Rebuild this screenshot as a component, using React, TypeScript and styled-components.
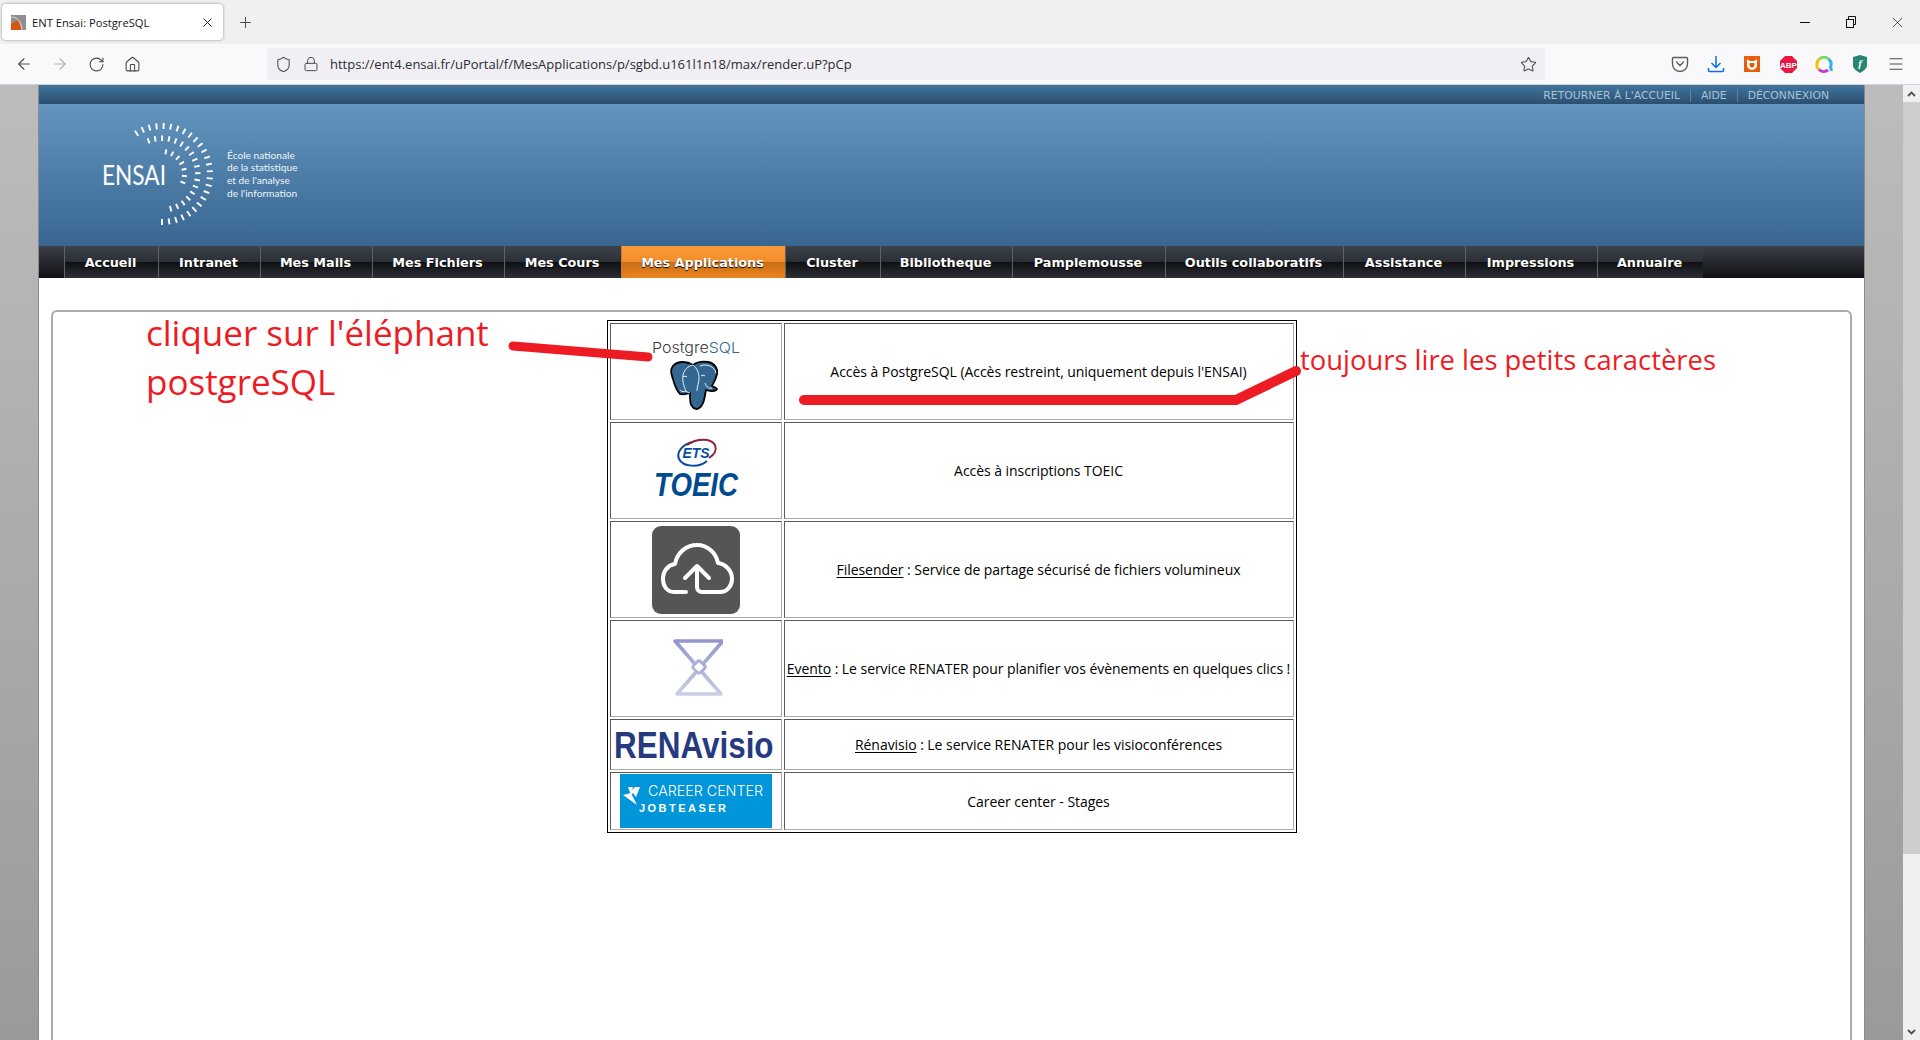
import React from 'react';
import styled, { createGlobalStyle } from 'styled-components';
import {
  ArrowLeft,
  ArrowRight,
  House,
  Lock,
  Menu,
  Plus,
  RotateCw,
  Shield,
  Star,
  X,
} from 'lucide-react';

const GlobalStyle = createGlobalStyle`
  html, body {
    margin: 0;
    padding: 0;
    height: 100%;
    overflow: hidden;
    background: #fff;
  }
  * {
    box-sizing: border-box;
  }
`;

const Root = styled.div`
  position: relative;
  width: 1920px;
  height: 1040px;
  overflow: hidden;
  display: flex;
  flex-direction: column;
  font-family: 'Open Sans', sans-serif;
`;

/* browser chrome */
const TabStrip = styled.div`
  height: 44px;
  background: #f0f0f0;
  display: flex;
  align-items: center;
  padding-left: 2px;
  flex-shrink: 0;
`;
const Tab = styled.div`
  width: 221px;
  height: 36px;
  background: #fff;
  border-radius: 4px;
  box-shadow: 0 0 3px rgba(0, 0, 0, 0.4);
  display: flex;
  align-items: center;
  padding: 0 8px 0 9px;
  color: #15141a;
`;
const TabTitle = styled.span`
  font-size: 11.2px;
  margin-left: 6px;
  flex: 1;
  white-space: nowrap;
`;
const NewTab = styled.div`
  width: 24px;
  height: 24px;
  margin-left: 10px;
  display: flex;
  align-items: center;
  justify-content: center;
  color: #4a4a50;
`;
const WindowControls = styled.div`
  margin-left: auto;
  display: flex;
`;
const WindowButton = styled.div`
  width: 46px;
  height: 44px;
  display: flex;
  align-items: center;
  justify-content: center;
  color: #111;
`;
const MinimizeBar = styled.div`
  width: 10px;
  height: 1px;
  background: #111;
`;
const Toolbar = styled.div`
  height: 41px;
  background: #f9f9fb;
  border-bottom: 1px solid #d4d4d6;
  display: flex;
  align-items: center;
  padding: 0 6px;
  flex-shrink: 0;
`;
const ToolButton = styled.div<{ $muted?: boolean }>`
  width: 36px;
  height: 32px;
  display: flex;
  align-items: center;
  justify-content: center;
  color: ${(p) => (p.$muted ? '#b4b4b8' : '#4b4a50')};
`;
const UrlBar = styled.div`
  width: 1278px;
  height: 32px;
  margin: 0 117px 0 117px;
  background: #f0f0f4;
  border-radius: 4px;
  display: flex;
  align-items: center;
  padding: 0 8px;
  color: #4b4a50;
  gap: 11px;
`;
const UrlText = styled.span`
  font-size: 13px;
  color: #2b2a33;
  flex: 1;
`;

/* page */
const Viewport = styled.div`
  flex: 1;
  display: flex;
  min-height: 0;
`;
const PageBody = styled.div`
  flex: 1;
  min-height: 0;
  padding: 0 39px;
  background: linear-gradient(#bcbcbc, #9a9a9a);
`;
const Wrapper = styled.div`
  height: 100%;
  background: #fff;
  box-shadow: -1px 0 0 #8a8a8a, 1px 0 0 #8a8a8a;
  display: flex;
  flex-direction: column;
`;
const TopBar = styled.div`
  height: 19px;
  flex-shrink: 0;
  background: linear-gradient(#41749e, #2b4f6e);
  display: flex;
  justify-content: flex-end;
  align-items: center;
  padding: 2px 35px 0 0;
`;
const TopLink = styled.a`
  font-family: 'DejaVu Sans', sans-serif;
  font-size: 10.8px;
  line-height: 13px;
  color: #a5c3da;
  padding: 0 10px;
  border-left: 1px solid #5c83a3;
  white-space: nowrap;
  &:first-child {
    border-left: 0;
  }
  &:last-child {
    padding-right: 0;
  }
`;
const Header = styled.div`
  height: 142px;
  flex-shrink: 0;
  background: linear-gradient(#6395bf, #386690);
  padding: 6px 0 0 51px;
`;
const Nav = styled.nav`
  height: 32px;
  flex-shrink: 0;
  background: linear-gradient(#3c4048, #0f1013);
  display: flex;
  padding-left: 25px;
`;
const NavItem = styled.a<{ $w: number; $active?: boolean }>`
  width: ${(p) => p.$w}px;
  padding-right: 2px;
  font-family: 'DejaVu Sans', sans-serif;
  font-weight: bold;
  font-size: 12.8px;
  line-height: 33px;
  text-align: center;
  color: #fff;
  white-space: nowrap;
  text-shadow: 0 1px 1px #000;
  border-left: 1px solid ${(p) => (p.$active ? '#c97a2a' : '#5f6268')};
  background: ${(p) =>
    p.$active
      ? 'linear-gradient(#fb9a3a 0, #f28d2a 50%, #c76d14 50%, #ec8420 100%)'
      : 'linear-gradient(#3d414a 0, #2a2e35 50%, #0f1012 50%, #2c2f35 100%)'};
`;
const Panel = styled.div`
  margin: 32px 12px 0;
  padding-top: 8px;
  height: 900px;
  flex-shrink: 0;
  border: 2px solid #aaa;
  border-radius: 6px;
  display: flex;
  justify-content: center;
  align-items: flex-start;
`;
const AppTable = styled.table`
  border: 1px solid #000;
  border-spacing: 2px;
  border-collapse: separate;
  width: 690px;
  table-layout: fixed;
`;
const LogoCell = styled.td<{ $h: number }>`
  height: ${(p) => p.$h}px;
  padding: 0;
  text-align: center;
  vertical-align: middle;
  border: 1px solid;
  border-color: #5a5a5a #aaa #aaa #5a5a5a;
  svg {
    display: block;
    margin: 0 auto;
  }
`;
const TextCell = styled.td`
  padding: 1px;
  text-align: center;
  vertical-align: middle;
  border: 1px solid;
  border-color: #5a5a5a #aaa #aaa #5a5a5a;
  font-size: 14px;
  color: #000;
  white-space: nowrap;
  letter-spacing: -0.05px;
`;
const ServiceLink = styled.span`
  text-decoration: underline;
  text-underline-offset: 2px;
`;

/* scrollbar */
const Scrollbar = styled.div`
  width: 17px;
  background: #f0f0f0;
  display: flex;
  flex-direction: column;
  position: relative;
`;
const ScrollButton = styled.div`
  height: 17px;
  display: flex;
  align-items: center;
  justify-content: center;
  color: #505050;
`;
const ScrollThumb = styled.div`
  height: 752px;
  background: #cdcdcd;
`;
const ScrollDown = styled(ScrollButton)`
  margin-top: auto;
`;

/* what was added on top of the screenshot in red */
const Note = styled.div<{ $left: number; $top: number; $size: number; $lh: number }>`
  position: absolute;
  left: ${(p) => p.$left}px;
  top: ${(p) => p.$top}px;
  font-size: ${(p) => p.$size}px;
  line-height: ${(p) => p.$lh}px;
  color: #ed1c24;
  white-space: pre;
`;
const Scribble = styled.svg`
  position: absolute;
  left: 0;
  top: 0;
  pointer-events: none;
`;

const NAV_ITEMS: [string, number, boolean?][] = [
  ['Accueil', 94],
  ['Intranet', 102],
  ['Mes Mails', 112],
  ['Mes Fichiers', 132],
  ['Mes Cours', 117],
  ['Mes Applications', 164, true],
  ['Cluster', 95],
  ['Bibliotheque', 132],
  ['Pamplemousse', 153],
  ['Outils collaboratifs', 178],
  ['Assistance', 122],
  ['Impressions', 132],
  ['Annuaire', 106],
];

const Favicon = () => (
  <svg width="15" height="15" viewBox="0 0 15 15">
    <rect width="15" height="15" fill="#8f8f8f" />
    <path d="M0 15V9L7 5l4 10z" fill="#d9530f" />
    <path d="M0 2c6 0 10 4 11 13" stroke="#d0d0d0" strokeWidth="1.2" fill="none" />
  </svg>
);

const RestoreIcon = () => (
  <svg width="12" height="12" viewBox="0 0 12 12" fill="none" stroke="#111">
    <rect x="1.5" y="3.5" width="7" height="8" />
    <path d="M3.5 3.5V0.5h7v8H8.5" />
  </svg>
);

const PocketIcon = () => (
  <svg width="18" height="18" viewBox="0 0 18 18" fill="none" stroke="#5b5b60" strokeWidth="1.4">
    <path d="M2.5 2.5h13a1 1 0 0 1 1 1V9a7.5 7.5 0 0 1-15 0V3.5a1 1 0 0 1 1-1z" />
    <path d="M5.5 7L9 10.5 12.5 7" strokeLinecap="round" />
  </svg>
);

const DownloadIcon = () => (
  <svg width="18" height="18" viewBox="0 0 18 18" fill="none" stroke="#0a6ee8" strokeWidth="1.5">
    <path d="M9 1v11M4.5 8L9 12.5 13.5 8" />
    <path d="M1.5 13v2.5a1 1 0 0 0 1 1h13a1 1 0 0 0 1-1V13" />
  </svg>
);

const CatIcon = () => (
  <svg width="16" height="16" viewBox="0 0 16 16">
    <rect width="16" height="16" fill="#e4600f" />
    <path d="M3 3l2.5 2h5L13 3v6c0 3-2.5 4.500-5 5-2.500-.5-5-2-5-5z" fill="#fff" />
    <path d="M5.500 7h5v2c0 1.500-1.200 2.300-2.500 2.700C6.700 11.300 5.500 10.500 5.500 9z" fill="#e4600f" />
  </svg>
);

const AbpIcon = () => (
  <svg width="17" height="17" viewBox="0 0 17 17">
    <path d="M5 0h7l5 5v7l-5 5H5l-5-5V5z" fill="#e8173f" />
    <text x="8.5" y="11.500" textAnchor="middle" fontSize="8" fontWeight="bold" fill="#fff" fontFamily="'Liberation Sans', sans-serif">
      ABP
    </text>
  </svg>
);

const RingIcon = () => (
  <svg width="18" height="18" viewBox="0 0 18 18" fill="none" strokeWidth="3">
    <path d="M4 14.500A6.800 6.800 0 0 1 4.500 4" stroke="#f4c20d" />
    <path d="M4.500 4A6.800 6.800 0 0 1 13.500 4" stroke="#7ed957" />
    <path d="M13.500 4A6.800 6.800 0 0 1 15.500 12l1 4" stroke="#2fb5e8" />
    <path d="M13 15A6.800 6.800 0 0 1 4 14.500" stroke="#c03ad8" />
  </svg>
);

const ShieldIcon = () => (
  <svg width="14" height="18" viewBox="0 0 14 18">
    <path d="M0 2l7-2 7 2v8c0 4-4 6-7 8-3-2-7-4-7-8z" fill="#27866f" />
    <text x="7" y="12" textAnchor="middle" fontSize="11" fontWeight="bold" fontStyle="italic" fill="#fff" fontFamily="'Liberation Serif', serif">
      f
    </text>
  </svg>
);

// ticks of the three arcs around the ENSAI word
const ticks = (r: number, from: number, to: number, n: number, len: number) =>
  Array.from({ length: n }, (_, i) => {
    const a = ((from + ((to - from) * i) / (n - 1)) * Math.PI) / 180;
    const c = Math.cos(a);
    const s = Math.sin(a);
    return `M${(72 + r * c).toFixed(1)} ${(64 + r * s).toFixed(1)}L${(72 + (r + len) * c).toFixed(1)} ${(64 + (r + len) * s).toFixed(1)}`;
  }).join('');

const EnsaiLogo = () => (
  <svg width="220" height="130" viewBox="0 0 220 130">
    <path
      d={ticks(45, -122, 90, 26, 6) + ticks(33, -112, 76, 18, 5.5) + ticks(20, -80, 22, 7, 5)}
      stroke="#fff"
      strokeWidth="1.900"
      fill="none"
    />
    <text x="12" y="75" fontSize="26" fontFamily="Lato, sans-serif" fill="#fff" textLength="64" lengthAdjust="spacingAndGlyphs">
      ENSAI
    </text>
    <g fontSize="10.200" fontFamily="Lato, sans-serif" fill="#eef4f9">
      <text x="137" y="49">École nationale</text>
      <text x="137" y="61">de la statistique</text>
      <text x="137" y="74">et de l'analyse</text>
      <text x="137" y="87">de l'information</text>
    </g>
  </svg>
);

const PostgresLogo = () => (
  <svg width="170" height="95" viewBox="0 0 170 95">
    <text x="41" y="29" fontSize="14.800" fontWeight="300" fontFamily="Inter, sans-serif" textLength="88" lengthAdjust="spacingAndGlyphs">
      <tspan fill="#3a3a3a">Postgre</tspan>
      <tspan fill="#336791">SQL</tspan>
    </text>
    <g transform="translate(59 37)">
      <path
        d="M2 15C-1 7 4 1 13 1c4 0 7 1 10 3 4-3 9-4 15-3 6 1 10 6 9 12-1 5-3 8-5 12 2 1 5 2 5 3-1 2-6 3-11 1-1 4-1 9-3 13-2 5-5 6-7 6-4-1-6-5-6-11v-5c-3 1-7 2-10 1C6 30 4 22 2 15z"
        fill="#336791"
        stroke="#000"
        strokeWidth="1.800"
        strokeLinejoin="round"
      />
      <g fill="none" stroke="#fff" strokeWidth="0.900">
        <path d="M23 4c-5 1-9 5-10 10-1 6 1 12 3 16 1 1 3 2 4 2M23 4c4 3 6 8 6 13 0 5-2 8-2 13M46 12c-1-6-9-10-16-7" />
        <path d="M16 30c-2 1-4 1-6-1M35 22c1 3 3 6 7 5M13 16c1-1 3-1 4 0M31 15c1-1 3-1 4 0" />
      </g>
    </g>
  </svg>
);

const ToeicLogo = () => (
  <svg width="170" height="95" viewBox="0 0 170 95">
    <path d="M96 38C88 45 72 44 68 36 65 29 72 21 82 19" fill="none" stroke="#0a4f9c" strokeWidth="2" />
    <path d="M76 22c10-7 24-7 28 0 2 5-1 10-6 13" fill="none" stroke="#8f1f3a" strokeWidth="2" />
    <text x="85" y="35" textAnchor="middle" fontSize="14" fontWeight="bold" fontStyle="italic" fill="#0a4f9c" fontFamily="'Liberation Sans', sans-serif">
      ETS
    </text>
    <text x="43" y="73" fontSize="34" fontWeight="bold" fontStyle="italic" fill="#004a8f" fontFamily="'Liberation Sans', sans-serif" textLength="84" lengthAdjust="spacingAndGlyphs">
      TOEIC
    </text>
  </svg>
);

const FilesenderLogo = () => (
  <svg width="88" height="88" viewBox="0 0 88 88">
    <rect width="88" height="88" rx="9" fill="#555" />
    <path
      d="M34 66H22C15 66 11 60 11 53c0-8 5-14 12-15 2-11 11-19 22-19s19 8 21 18c8 1 14 8 14 16 0 7-5 13-12 13H50c-3 0-5-2-5-5V41M33 52l12-12 12 12"
      fill="none"
      stroke="#fff"
      strokeWidth="4"
      strokeLinecap="round"
      strokeLinejoin="round"
    />
  </svg>
);

const EventoLogo = () => (
  <svg width="54" height="60" viewBox="-3 1 54 60">
    <defs>
      <linearGradient id="evento" x1="0" y1="0" x2="0" y2="60" gradientUnits="userSpaceOnUse">
        <stop offset="0" stopColor="#8f93cc" />
        <stop offset="1" stopColor="#cdd0e4" />
      </linearGradient>
    </defs>
    <path
      d="M3 3H51L5 56H49L3 3z"
      fill="none"
      stroke="url(#evento)"
      strokeWidth="3.500"
      strokeLinejoin="round"
    />
    <rect x="22" y="24" width="10" height="10" rx="2.500" fill="#fff" stroke="url(#evento)" strokeWidth="3" transform="rotate(45 27 29)" />
  </svg>
);

const RenavisioLogo = () => (
  <svg width="170" height="46" viewBox="0 0 170 46">
    <text transform="translate(3 36) scale(0.85 1)" fontSize="37" fontWeight="bold" fill="#263a80" fontFamily="'Liberation Sans', sans-serif">
      RENAvisio
    </text>
  </svg>
);

const CareerLogo = () => (
  <svg width="152" height="54" viewBox="0 0 152 54">
    <rect width="152" height="54" fill="#0096d9" />
    <path d="M8 13h5l-1 3 3-3h5l-4 10-3-4-2 2zM3 21l8-2 6 12z" fill="#fff" />
    <text x="28" y="22" fontSize="14" fontWeight="300" fill="#fff" fontFamily="Inter, sans-serif" textLength="115" lengthAdjust="spacingAndGlyphs">
      CAREER CENTER
    </text>
    <text x="19" y="38" fontSize="11" fontWeight="bold" fill="#fff" fontFamily="'Liberation Sans', sans-serif" textLength="87">
      JOBTEASER
    </text>
  </svg>
);

const App: React.FC = () => {
  return (
    <Root>
      <GlobalStyle />
      <TabStrip>
        <Tab>
          <Favicon />
          <TabTitle>ENT Ensai: PostgreSQL</TabTitle>
          <X size={15} strokeWidth={1.5} />
        </Tab>
        <NewTab>
          <Plus size={17} strokeWidth={1.4} />
        </NewTab>
        <WindowControls>
          <WindowButton>
            <MinimizeBar />
          </WindowButton>
          <WindowButton>
            <RestoreIcon />
          </WindowButton>
          <WindowButton>
            <X size={17} strokeWidth={1} />
          </WindowButton>
        </WindowControls>
      </TabStrip>

      <Toolbar>
        <ToolButton>
          <ArrowLeft size={18} strokeWidth={1.5} />
        </ToolButton>
        <ToolButton $muted>
          <ArrowRight size={18} strokeWidth={1.5} />
        </ToolButton>
        <ToolButton>
          <RotateCw size={17} strokeWidth={1.5} />
        </ToolButton>
        <ToolButton>
          <House size={17} strokeWidth={1.5} />
        </ToolButton>
        <UrlBar>
          <Shield size={17} strokeWidth={1.5} />
          <Lock size={16} strokeWidth={1.5} />
          <UrlText>https://ent4.ensai.fr/uPortal/f/MesApplications/p/sgbd.u161l1n18/max/render.uP?pCp</UrlText>
          <Star size={17} strokeWidth={1.5} />
        </UrlBar>
        <ToolButton>
          <PocketIcon />
        </ToolButton>
        <ToolButton>
          <DownloadIcon />
        </ToolButton>
        <ToolButton>
          <CatIcon />
        </ToolButton>
        <ToolButton>
          <AbpIcon />
        </ToolButton>
        <ToolButton>
          <RingIcon />
        </ToolButton>
        <ToolButton>
          <ShieldIcon />
        </ToolButton>
        <ToolButton>
          <Menu size={18} strokeWidth={1.4} />
        </ToolButton>
      </Toolbar>

      <Viewport>
        <PageBody>
          <Wrapper>
            <TopBar>
              <TopLink>RETOURNER À L'ACCUEIL</TopLink>
              <TopLink>AIDE</TopLink>
              <TopLink>DÉCONNEXION</TopLink>
            </TopBar>
            <Header>
              <EnsaiLogo />
            </Header>
            <Nav>
              {NAV_ITEMS.map(([label, w, active]) => (
                <NavItem key={label} $w={w} $active={active}>
                  {label}
                </NavItem>
              ))}
            </Nav>
            <Panel>
              <AppTable>
                <colgroup>
                  <col width="172" />
                  <col />
                </colgroup>
                <tbody>
                  <tr>
                    <LogoCell $h={97}>
                      <PostgresLogo />
                    </LogoCell>
                    <TextCell>Accès à PostgreSQL (Accès restreint, uniquement depuis l'ENSAI)</TextCell>
                  </tr>
                  <tr>
                    <LogoCell $h={96}>
                      <ToeicLogo />
                    </LogoCell>
                    <TextCell>Accès à inscriptions TOEIC</TextCell>
                  </tr>
                  <tr>
                    <LogoCell $h={97}>
                      <FilesenderLogo />
                    </LogoCell>
                    <TextCell>
                      <ServiceLink>Filesender</ServiceLink> : Service de partage sécurisé de fichiers volumineux
                    </TextCell>
                  </tr>
                  <tr>
                    <LogoCell $h={97}>
                      <EventoLogo />
                    </LogoCell>
                    <TextCell>
                      <ServiceLink>Evento</ServiceLink> : Le service RENATER pour planifier vos évènements en quelques clics !
                    </TextCell>
                  </tr>
                  <tr>
                    <LogoCell $h={51}>
                      <RenavisioLogo />
                    </LogoCell>
                    <TextCell>
                      <ServiceLink>Rénavisio</ServiceLink> : Le service RENATER pour les visioconférences
                    </TextCell>
                  </tr>
                  <tr>
                    <LogoCell $h={58}>
                      <CareerLogo />
                    </LogoCell>
                    <TextCell>Career center - Stages</TextCell>
                  </tr>
                </tbody>
              </AppTable>
            </Panel>
          </Wrapper>
        </PageBody>
        <Scrollbar>
          <ScrollButton>
            <svg width="9" height="6" viewBox="0 0 9 6" fill="none" stroke="currentColor" strokeWidth="1.800">
              <path d="M1 5l3.500-3.500L8 5" />
            </svg>
          </ScrollButton>
          <ScrollThumb />
          <ScrollDown>
            <svg width="9" height="6" viewBox="0 0 9 6" fill="none" stroke="currentColor" strokeWidth="1.800">
              <path d="M1 1l3.500 3.500L8 1" />
            </svg>
          </ScrollDown>
        </Scrollbar>
      </Viewport>

      <Note $left={146} $top={308} $size={35} $lh={49}>
        {"cliquer sur l'éléphant\npostgreSQL"}
      </Note>
      <Note $left={1300} $top={340} $size={27.4} $lh={40}>
        toujours lire les petits caractères
      </Note>
      <Scribble width="1920" height="1040" viewBox="0 0 1920 1040" fill="none" stroke="#ed1c24" strokeLinecap="round" strokeLinejoin="round">
        <path d="M513 346L648 357" strokeWidth="9" />
        <path d="M804 400H1236L1296 371" strokeWidth="10" />
      </Scribble>
    </Root>
  );
};

export default App;
